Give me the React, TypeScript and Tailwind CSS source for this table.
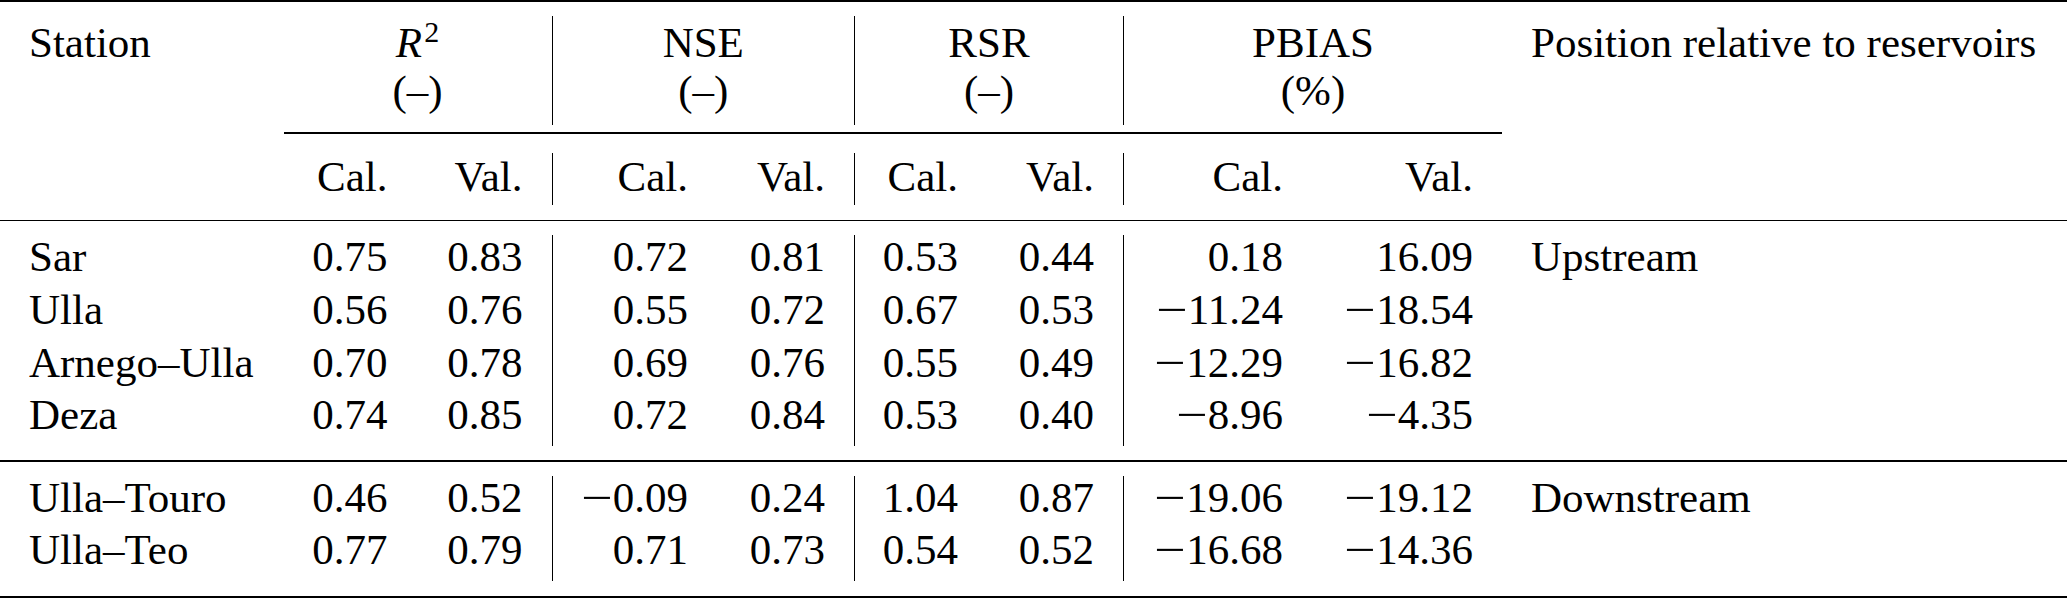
import React from "react";

// column template shared by every row, so the vertical rules line up
const GRID =
  "grid grid-cols-[283.5px_133px_136px_164.5px_138px_132px_137px_188px_190px_1fr]";

type Row = {
  station: string;
  values: string[];
  position?: string;
};

const upstream: Row[] = [
  {
    station: "Sar",
    values: ["0.75", "0.83", "0.72", "0.81", "0.53", "0.44", "0.18", "16.09"],
    position: "Upstream",
  },
  {
    station: "Ulla",
    values: ["0.56", "0.76", "0.55", "0.72", "0.67", "0.53", "-11.24", "-18.54"],
  },
  {
    station: "Arnego–Ulla",
    values: ["0.70", "0.78", "0.69", "0.76", "0.55", "0.49", "-12.29", "-16.82"],
  },
  {
    station: "Deza",
    values: ["0.74", "0.85", "0.72", "0.84", "0.53", "0.40", "-8.96", "-4.35"],
  },
];

const downstream: Row[] = [
  {
    station: "Ulla–Touro",
    values: ["0.46", "0.52", "-0.09", "0.24", "1.04", "0.87", "-19.06", "-19.12"],
    position: "Downstream",
  },
  {
    station: "Ulla–Teo",
    values: ["0.77", "0.79", "0.71", "0.73", "0.54", "0.52", "-16.68", "-14.36"],
  },
];

function Num({ v }: { v: string }) {
  if (!v.startsWith("-")) return <>{v}</>;

  return (
    <>
      <span className="inline-block w-[32px] text-center">
        <span className="inline-block scale-x-[1.3]">−</span>
      </span>
      {v.slice(1)}
    </>
  );
}

function DataRow({ row }: { row: Row }) {
  return (
    <div className={`${GRID} h-[52.75px] leading-[44.5px]`}>
      <div className="whitespace-nowrap pl-[29px]">{row.station}</div>
      {row.values.map((v, i) => (
        <div
          key={i}
          className={
            i === 1 || i === 3 || i === 5
              ? "whitespace-nowrap border-r-[1.5px] border-black pr-[29px] text-right"
              : "whitespace-nowrap pr-[29px] text-right"
          }
        >
          <Num v={v} />
        </div>
      ))}
      <div className="whitespace-nowrap pl-[29px]">{row.position}</div>
    </div>
  );
}

function GroupHead({
  title,
  unit,
  divider,
}: {
  title: React.ReactNode;
  unit: string;
  divider?: boolean;
}) {
  return (
    <div
      className={
        divider
          ? "col-span-2 border-r-[1.5px] border-black pt-[3px] text-center"
          : "col-span-2 pt-[3px] text-center"
      }
    >
      <div>{title}</div>
      <div>{unit}</div>
    </div>
  );
}

export default function App() {
  return (
    <div className="font-serif">
      <div className="h-[598px] w-[2067px] overflow-hidden bg-white text-[43px] text-black [font-family:Liberation_Serif,serif]">
        <div className="h-[2px] bg-black" />

        <div className={`${GRID} mt-[14px] h-[109px] leading-[48px]`}>
          <div className="pl-[29px] pt-[3px]">Station</div>
          <GroupHead
            title={
              <>
                <i>R</i>
                <sup className="ml-[2px] text-[30px]">2</sup>
              </>
            }
            unit="(–)"
            divider
          />
          <GroupHead title="NSE" unit="(–)" divider />
          <GroupHead title="RSR" unit="(–)" divider />
          <GroupHead title="PBIAS" unit="(%)" />
          <div className="whitespace-nowrap pl-[29px] pt-[3px]">
            Position relative to reservoirs
          </div>
        </div>

        <div className={`${GRID} mt-[7px] h-[1.5px]`}>
          <div className="col-start-2 col-end-10 bg-black" />
        </div>

        <div className={`${GRID} mt-[19px] h-[52.5px] leading-[47px]`}>
          <div />
          {["Cal.", "Val.", "Cal.", "Val.", "Cal.", "Val.", "Cal.", "Val."].map(
            (label, i) => (
              <div
                key={i}
                className={
                  i === 1 || i === 3 || i === 5
                    ? "border-r-[1.5px] border-black pr-[29px] text-right"
                    : "pr-[29px] text-right"
                }
              >
                {label}
              </div>
            ),
          )}
          <div />
        </div>

        <div className="mt-[14.5px] h-[1.5px] bg-black" />

        <div className="mt-[14px]">
          {upstream.map((row) => (
            <DataRow key={row.station} row={row} />
          ))}
        </div>

        <div className="mt-[14px] h-[1.5px] bg-black" />

        <div className="mt-[14px]">
          {downstream.map((row) => (
            <DataRow key={row.station} row={row} />
          ))}
        </div>

        <div className="mt-[15px] h-[2px] bg-black" />
      </div>
    </div>
  );
}
